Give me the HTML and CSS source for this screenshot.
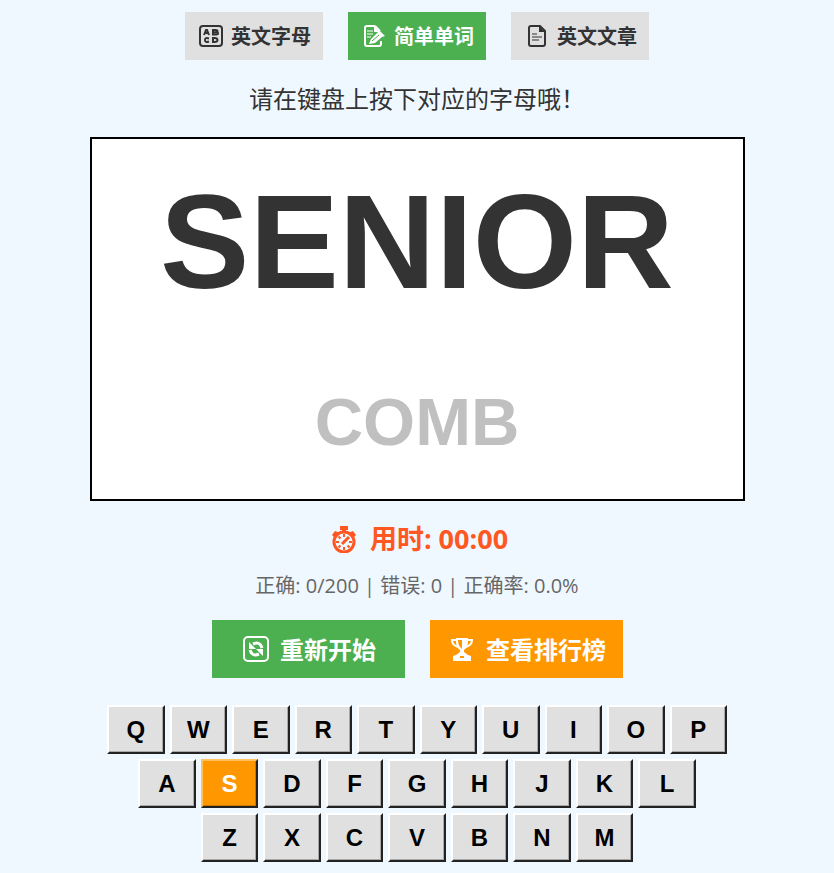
FILE: index.html
```html
<!DOCTYPE html>
<html lang="zh-CN">
<head>
  <meta charset="UTF-8">
  <meta name="viewport" content="width=device-width, initial-scale=1.0">
  <title>英文打字练习</title>
  <link rel="stylesheet" href="styles.css">
</head>
<body>
  <div class="container">
    <div class="modes">
      <button class="mode" type="button">
        <svg class="icon" viewBox="0 0 24 24" fill="none" stroke="currentColor" stroke-width="2">
          <rect x="1" y="2" width="22" height="20" rx="3"/>
          <path d="M5 11l2-5h1l2 5M6 9h3M14 6v4.500h3q2 0 2-1.200t-2-1.100h-3 2.500q2 0 2-1.100T16.500 6zM10 14.500q-4-1.500-4 1.500t4 1.500M14 14v4h1.500q3 0 3-2t-3-2z"/>
        </svg>
        英文字母
      </button>
      <button class="mode active" type="button">
        <svg class="icon" viewBox="0 0 24 24" fill="none" stroke="currentColor" stroke-width="2">
          <path d="M13 2H5q-2 0-2 2v16q0 2 2 2h12q2 0 2-2v-3M13 2l5 5"/>
          <path d="M5 7h6M5 10h6M5 13h4" stroke-width="1"/>
          <path d="M12 2v6h6z" fill="currentColor" stroke="none"/>
          <path d="M7 20l2-5 7-7 1-2 6 6-3 1-7 6z" fill="currentColor" stroke="none"/>
          <path d="M10 17l7-6" stroke="#4caf50" stroke-width="1"/>
        </svg>
        简单单词
      </button>
      <button class="mode" type="button">
        <svg class="icon" viewBox="0 0 24 24" fill="none" stroke="currentColor" stroke-width="2">
          <path d="M15 2H6q-2 0-2 2v16q0 2 2 2h12q2 0 2-2V7z"/>
          <path d="M14 2v6h6z" fill="currentColor" stroke="none"/>
          <path d="M7 10h5M7 13h10M7 16h7" stroke-width="1"/>
        </svg>
        英文文章
      </button>
    </div>

    <p class="hint">请在键盘上按下对应的字母哦！</p>

    <div class="board">
      <div class="current">SENIOR</div>
      <div class="next">COMB</div>
    </div>

    <div class="timer">
      <svg class="icon" viewBox="0 0 28 28" fill="none" stroke="currentColor" stroke-width="2">
        <path d="M10 1h8v4h-2v3h-4V5h-2zM2 10l3-4 5 2-5 5zM26 10l-3-4-5 2 5 5z" fill="currentColor" stroke="none"/>
        <circle cx="14" cy="17" r="10" stroke-width="3"/>
        <path d="M14 9v3M14 22v3M6 17h3M19 17h3M8.500 11.500l2 2M8.500 22.500l2-2M19.500 22.500l-2-2"/>
        <path d="M12 19l7-7" stroke-width="3"/>
      </svg>
      <span>用时: 00:00</span>
    </div>
    <p class="stats">正确: 0/200 | 错误: 0 | 正确率: 0.0%</p>

    <div class="actions">
      <button class="action restart" type="button">
        <svg class="icon" viewBox="0 0 28 28" fill="none" stroke="currentColor" stroke-width="2">
          <rect x="2" y="2" width="24" height="24" rx="4"/>
          <path d="M11 9q7-3 9 4M17 19q-7 3-9-4" stroke-width="3"/>
          <path d="M7 7v7h7zM21 21v-7h-7z" fill="currentColor" stroke="none"/>
        </svg>
        重新开始
      </button>
      <button class="action rank" type="button">
        <svg class="icon" viewBox="0 0 28 28" fill="none" stroke="currentColor" stroke-width="2">
          <path d="M9 5H4q0 5 6 7M19 5h5q0 5-6 7"/>
          <path d="M8 3h12v4q0 5-4 8v2l4 3 3 1v5H5v-5l3-1 4-3v-2q-4-3-4-8z" fill="currentColor" stroke="none"/>
          <path d="M10 5h4v9q-4-3-4-9zM12 21h4v2h-4z" fill="#ff9800" stroke="none"/>
        </svg>
        查看排行榜
      </button>
    </div>

    <div class="keyboard">
      <div class="row">
        <button class="key">Q</button>
        <button class="key">W</button>
        <button class="key">E</button>
        <button class="key">R</button>
        <button class="key">T</button>
        <button class="key">Y</button>
        <button class="key">U</button>
        <button class="key">I</button>
        <button class="key">O</button>
        <button class="key">P</button>
      </div>
      <div class="row">
        <button class="key">A</button>
        <button class="key target">S</button>
        <button class="key">D</button>
        <button class="key">F</button>
        <button class="key">G</button>
        <button class="key">H</button>
        <button class="key">J</button>
        <button class="key">K</button>
        <button class="key">L</button>
      </div>
      <div class="row">
        <button class="key">Z</button>
        <button class="key">X</button>
        <button class="key">C</button>
        <button class="key">V</button>
        <button class="key">B</button>
        <button class="key">N</button>
        <button class="key">M</button>
      </div>
    </div>
  </div>
</body>
</html>
```
FILE: styles.css
```css
* {
  box-sizing: border-box;
}

body {
  margin: 0;
  padding: 12px 16px 8px;
  background: #f0f8ff;
  color: #333;
  font-family: "Noto Sans CJK SC", sans-serif;
}

button {
  font-family: inherit;
  border: none;
  cursor: pointer;
}

.container {
  max-width: 655px;
  margin: 0 auto;
}

.modes,
.actions {
  display: flex;
  flex-wrap: wrap;
  justify-content: center;
  gap: 25px;
}

.mode,
.action {
  display: flex;
  align-items: center;
  justify-content: center;
  padding: 0 0 0 2px;
  font-weight: bold;
  white-space: nowrap;
}

.mode {
  width: 138px;
  height: 48px;
  gap: 8px;
  background: #e0e0e0;
  color: #333;
  font-size: 20px;
  line-height: 28px;
}

.mode.active {
  background: #4caf50;
  color: #fff;
}

.icon {
  width: 28px;
  height: 28px;
  flex: none;
}

.mode .icon {
  width: 24px;
  height: 24px;
}

.hint {
  margin: 20px 0 21px;
  font-size: 24px;
  line-height: 36px;
  text-align: center;
}

.board {
  padding: 23px 0 37px;
  background: #fff;
  border: 2px solid #000;
  font-family: "Liberation Sans", Arial, sans-serif;
  font-weight: bold;
  text-align: center;
}

.current {
  font-size: 134px;
  line-height: 160px;
}

.next {
  margin-top: 60px;
  color: #c0c0c0;
  font-size: 67px;
  line-height: 80px;
}

.timer {
  display: flex;
  align-items: center;
  justify-content: center;
  gap: 12px;
  margin-top: 20px;
  padding-left: 4px;
  color: #ff5722;
  font-family: "Open Sans", "Noto Sans CJK SC", sans-serif;
  font-size: 27px;
  line-height: 36px;
  font-weight: bold;
}

.stats {
  margin: 15px 0 20px;
  color: #666;
  font-family: "Open Sans", "Noto Sans CJK SC", sans-serif;
  font-size: 20px;
  line-height: 28px;
  text-align: center;
}

.action {
  width: 193px;
  height: 58px;
  gap: 10px;
  color: #fff;
  font-size: 24px;
  line-height: 36px;
}

.restart {
  background: #4caf50;
}

.rank {
  background: #ff9800;
}

.keyboard {
  display: flex;
  flex-direction: column;
  gap: 5px;
  max-width: 620px;
  margin: 27px auto 0;
}

.row {
  display: flex;
  justify-content: center;
  gap: 5px;
}

.key {
  flex: 0 0 calc((100% - 45px) / 10);
  height: 49px;
  padding: 0;
  background: #e0e0e0;
  color: #000;
  border: 2px solid #222;
  border-top-color: #fff;
  border-left-color: #fff;
  box-shadow: inset -1px -1px 0 #a8a8a8;
  font-family: "Liberation Sans", Arial, sans-serif;
  font-size: 24px;
  font-weight: bold;
}

.key.target {
  background: #ff9800;
  color: #fff;
  border-top-color: #ffc060;
  border-left-color: #ffc060;
  box-shadow: inset -1px -1px 0 #c87800;
}
```
